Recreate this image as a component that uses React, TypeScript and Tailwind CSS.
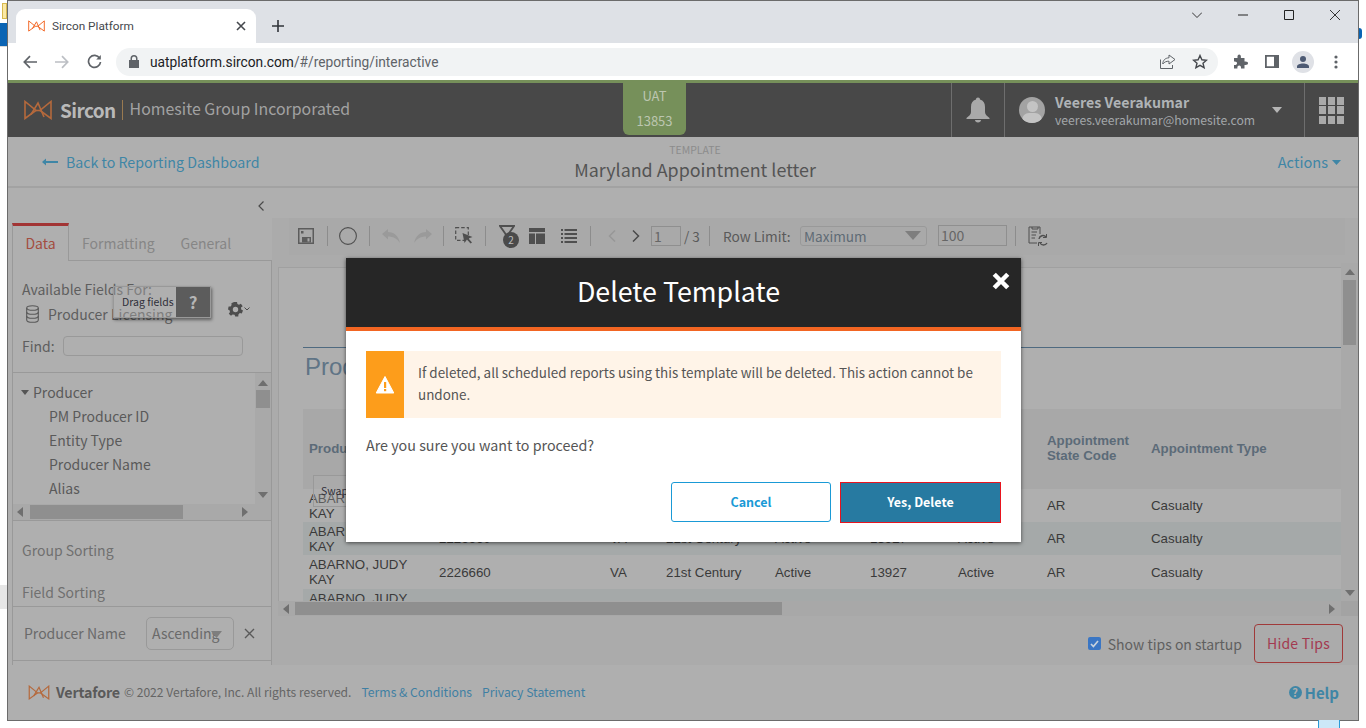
import React from "react";

const Logo = ({ w, h, c }: { w: number; h: number; c: string }) => (
  <svg width={w} height={h} viewBox="0 0 28 20" fill="none" stroke={c} strokeWidth="1.6">
    <path d="M1 1.5V18.5L12 10.5L1 1.5Z" />
    <path d="M27 1.5V18.5L16 10.5L27 1.5Z" />
    <path d="M7 14.5L14 3L20 17" />
    <path d="M12 10.5L16 10.5" />
  </svg>
);

const Sep = ({ ml, mr }: { ml: number; mr: number }) => (
  <div className="w-px h-[20px] bg-[#8c8c8c] shrink-0" style={{ marginLeft: ml, marginRight: mr }} />
);

const Arrow = ({ d }: { d: "u" | "d" | "l" | "r" }) => {
  const p = { u: "M0 6L5 0L10 6Z", d: "M0 0H10L5 6Z", l: "M6 0V10L0 5Z", r: "M0 0V10L6 5Z" }[d];
  return (
    <svg width="10" height="10" viewBox="0 0 10 10" className="shrink-0" fill="#6f6f6f">
      <path d={p} />
    </svg>
  );
};

const rows = [
  { bg: "bg-[#afafaf]", h: "h-[33px]" },
  { bg: "bg-[#a5a9a9]", h: "h-[33px]" },
  { bg: "bg-[#afafaf]", h: "h-[34px]" },
];
const gridCols = "grid grid-cols-[136px_171px_56px_109px_95px_88px_89px_104px_115px] items-center";

export default function App() {
  return (
    <div className="relative w-[1366px] h-[728px] overflow-hidden bg-white font-['Noto_Sans_CJK_JP','Liberation_Sans',sans-serif]">
      <div className="absolute left-[2px] top-[3px] w-[5px] h-[16px] bg-[#fbe9a5] border border-[#d8b94e]" />
      <div className="absolute left-0 top-[23px] w-[7px] h-[23px] bg-[#0a64b4]" />
      <div className="absolute left-0 top-[585px] w-[7px] h-[24px] bg-[#e6e6e6]" />
      <div className="absolute left-[1359px] top-[28px] w-[3px] h-[11px] rounded-r-full bg-[#0a64b4]" />
      <div className="absolute left-[0px] top-[46px] w-[7px] h-px bg-[#d8d8d8]" />
      <div className="absolute left-[1318px] top-[720px] w-[22px] h-[8px] bg-[#cce8f8] border-x border-[#2b9ad6]" />

      <div className="ml-[7px] w-[1352px] h-[721px] border border-[#6b6b6b] flex flex-col bg-[#afafaf]">
        {/* Browser tab strip */}
        <div className="h-[42px] shrink-0 bg-[#dee1e6] flex items-end pl-[8px] font-['Roboto',sans-serif]">
          <div className="w-[240px] h-[34px] bg-white rounded-t-[9px] flex items-center pl-[12px] pr-[10px]">
            <Logo w={17} h={12} c="#f26522" />
            <span className="ml-[7px] text-[11.8px] leading-[16px] text-[#45484d]">Sircon Platform</span>
            <svg className="ml-auto" width="10" height="10" viewBox="0 0 10 10" stroke="#45484d" strokeWidth="1.6">
              <path d="M1 1L9 9M9 1L1 9" />
            </svg>
          </div>
          <svg className="ml-[16px] mb-[11px]" width="12" height="12" viewBox="0 0 12 12" stroke="#30343a" strokeWidth="1.6">
            <path d="M6 0V12M0 6H12" />
          </svg>
          <div className="ml-auto self-start flex items-center h-[28px] pr-[18px] gap-[36px]">
            <svg width="10" height="6" viewBox="0 0 10 6" fill="none" stroke="#222" strokeWidth="0.9">
              <path d="M0 0.5L5 5.5L10 0.5" />
            </svg>
            <svg width="10" height="10" viewBox="0 0 10 10" stroke="#222" strokeWidth="1">
              <path d="M0 5H10" />
            </svg>
            <svg width="10" height="10" viewBox="0 0 10 10" fill="none" stroke="#222" strokeWidth="1">
              <path d="M0.5 0.5H9.5V9.5H0.5Z" />
            </svg>
            <svg width="10" height="10" viewBox="0 0 10 10" stroke="#222" strokeWidth="0.9">
              <path d="M0 0L10 10M10 0L0 10" />
            </svg>
          </div>
        </div>

        {/* Browser toolbar */}
        <div className="h-[37px] shrink-0 bg-white flex items-center font-['Roboto',sans-serif]">
          <svg className="ml-[15px]" width="14" height="14" viewBox="0 0 14 14" fill="none" stroke="#5f6368" strokeWidth="1.7">
            <path d="M14 7H1.5M7 1.2L1.3 7L7 12.8" />
          </svg>
          <svg className="ml-[18px]" width="14" height="14" viewBox="0 0 14 14" fill="none" stroke="#bcbfc4" strokeWidth="1.7">
            <path d="M0 7H12.5M7 1.2L12.7 7L7 12.8" />
          </svg>
          <svg className="ml-[18px]" width="15" height="15" viewBox="0 0 15 15" fill="none" stroke="#5f6368" strokeWidth="1.7">
            <path d="M12.6 4.2A6 6 0 1 0 13.5 8" />
            <path d="M13.8 1V5.6H9.2Z" fill="#5f6368" stroke="none" />
          </svg>
          <div className="ml-[14px] w-[1102px] h-[28px] bg-[#f1f3f4] rounded-full flex items-center pl-[13px] pr-[10px]">
            <svg width="10" height="13" viewBox="0 0 10 13" fill="#5f6368">
              <path d="M1.5 5V3.6a3.5 3.5 0 0 1 7 0V5H10V13H0V5ZM3 5H7V3.6a2 2 0 0 0-4 0Z" />
            </svg>
            <span className="ml-[11px] text-[13.75px] leading-[18px] text-[#5f6368]">
              <span className="text-[#202124]">uatplatform.sircon.com</span>/#/reporting/interactive
            </span>
            <svg className="ml-auto" width="16" height="15" viewBox="0 0 16 15" fill="none" stroke="#5f6368" strokeWidth="1">
              <path d="M0.5 5.5V14.5H12.5V11" />
              <path d="M9 1V3.8C5 4 2.8 6.5 2.8 10C4.5 7.8 6.5 7.2 9 7.2V10L15 5.5Z" />
            </svg>
            <svg className="ml-[16px]" width="16" height="15" viewBox="0 0 16 15" fill="none" stroke="#45484d" strokeWidth="1.4">
              <path d="M8 1.5L9.9 5.8L14.5 6.2L11 9.2L12.1 13.7L8 11.3L3.9 13.7L5 9.2L1.5 6.2L6.1 5.8Z" />
            </svg>
          </div>
          <svg className="ml-[15px]" width="15" height="15" viewBox="0 0 15 15" fill="#5f6368">
            <path d="M1 4H4.5C4.2 1.2 5.2 0.5 6.2 0.5S8.2 1.2 7.9 4H11.5V7.5C14.2 7.2 15 8.2 15 9.2S14.2 11.2 11.5 10.9V14.5H8C8.2 12.3 7.4 11.5 6.2 11.5S4.2 12.3 4.4 14.5H1V11C3.2 11.2 4 10.2 4 9.2S3.2 7.2 1 7.5Z" />
          </svg>
          <svg className="ml-[17px]" width="14" height="13" viewBox="0 0 14 13" fill="#5f6368">
            <path d="M0 0H14V13H0ZM1.8 1.8V11.2H9V1.8Z" fill="#5f6368" fillRule="evenodd" />
          </svg>
          <div className="ml-[13px] w-[22px] h-[22px] rounded-full bg-[#dfe1e6] flex items-center justify-center">
            <svg width="12" height="12" viewBox="0 0 12 12" fill="#4d5a73">
              <circle cx="6" cy="3" r="3" />
              <path d="M0 12V10.5C0 8.5 3 7.5 6 7.5S12 8.5 12 10.5V12Z" />
            </svg>
          </div>
          <svg className="ml-[20px]" width="4" height="14" viewBox="0 0 4 14" fill="#5f6368">
            <circle cx="2" cy="2" r="1.6" />
            <circle cx="2" cy="7" r="1.6" />
            <circle cx="2" cy="12" r="1.6" />
          </svg>
        </div>

        <div className="h-[3px] shrink-0 bg-[#76905a]" />

        {/* App header */}
        <div className="h-[54px] shrink-0 bg-[#484848] flex items-stretch">
          <div className="w-[615px] flex items-center pl-[16px] shrink-0">
            <Logo w={28} h={20} c="#b5693c" />
            <span className="ml-[8px] text-[19px] leading-[26px] font-bold text-[#b9b9b9] tracking-[-0.6px]">Sircon</span>
            <div className="ml-[6px] w-px h-[20px] bg-[#9a7a50]" />
            <span className="ml-[7px] -mt-[2px] text-[15.9px] leading-[26px] text-[#a2a2a2]">Homesite Group Incorporated</span>
          </div>
          <div className="w-[63px] h-[52px] shrink-0 bg-[#76905a] rounded-b-[6px] flex flex-col items-center text-[#bcc6b0] text-[13px] leading-[25px]">
            <span>UAT</span>
            <span>13853</span>
          </div>
          <div className="ml-[265px] w-[54px] border-x border-[#6e6e6e] shrink-0 flex items-center justify-center">
            <svg width="24" height="26" viewBox="0 0 24 26" fill="#a9a9a9">
              <path d="M12 0.5C13.3 0.5 14 1.4 14 2.5C17.5 3.5 19 6 19 10V15C19 17.5 21 19 23.5 21V22H0.5V21C3 19 5 17.5 5 15V10C5 6 6.5 3.5 10 2.5C10 1.4 10.7 0.5 12 0.5Z" />
              <path d="M9 23H15C15 24.5 13.7 25.5 12 25.5S9 24.5 9 23Z" />
            </svg>
          </div>
          <div className="w-[299px] shrink-0 flex items-center pl-[14px]">
            <div className="relative w-[26px] h-[26px] rounded-full bg-[#a3a3a3] overflow-hidden shrink-0">
              <div className="absolute left-[7.5px] top-[4px] w-[11px] h-[11px] rounded-full bg-[#c4c4c4]" />
              <div className="absolute left-[3px] top-[16px] w-[20px] h-[14px] rounded-full bg-[#c4c4c4]" />
            </div>
            <div className="ml-[10px] flex flex-col">
              <span className="text-[14.2px] leading-[19px] font-bold text-[#afb3b6]">Veeres Veerakumar</span>
              <span className="text-[12.2px] leading-[16px] text-[#a3a7aa]">veeres.veerakumar@homesite.com</span>
            </div>
            <svg className="ml-auto mr-[22px]" width="10" height="6" viewBox="0 0 10 6" fill="#b5b5b5">
              <path d="M0 0H10L5 6Z" />
            </svg>
          </div>
          <div className="flex-1 border-l border-[#6e6e6e] flex items-center justify-center">
            <div className="grid grid-cols-3 gap-[1.5px] w-[25px]">
              {Array.from({ length: 9 }).map((_, i) => (
                <div key={i} className="h-[8px] bg-[#aaaaaa]" />
              ))}
            </div>
          </div>
        </div>

        {/* Sub header */}
        <div className="relative h-[51px] shrink-0 border-b-2 border-[#a2a2a2] flex items-center justify-between pl-[34px] pr-[17px] pt-[1px]">
          <div className="flex items-center">
            <svg width="16" height="8" viewBox="0 0 16 8" fill="#3f86a6">
              <path d="M0 4L4 0.5V3H16V5H4V7.5Z" />
            </svg>
            <span className="ml-[8px] text-[14.2px] leading-[20px] text-[#3f86a6]">Back to Reporting Dashboard</span>
          </div>
          <div className="absolute left-[687px] -translate-x-1/2 top-[6px] flex flex-col items-center">
            <span className="text-[10.5px] leading-[14px] text-[#8c8c8c]">TEMPLATE</span>
            <span className="text-[17.9px] leading-[26px] -mt-[1px] text-[#545454] whitespace-nowrap">Maryland Appointment letter</span>
          </div>
          <div className="flex items-center">
            <span className="text-[14.6px] leading-[20px] text-[#3f86a6]">Actions</span>
            <svg className="ml-[4px]" width="9" height="5" viewBox="0 0 9 5" fill="#3f86a6">
              <path d="M0 0H9L4.5 5Z" />
            </svg>
          </div>
        </div>

        {/* Main */}
        <div className="h-[477px] shrink-0 flex">
          {/* Left panel */}
          <div className="relative w-[264px] shrink-0 pl-[4px] flex flex-col">
            <div className="h-[35px] shrink-0 flex items-center justify-end pr-[8px]">
              <svg width="6" height="10" viewBox="0 0 6 10" fill="none" stroke="#4a4a4a" strokeWidth="1.2">
                <path d="M5.5 0.5L1 5L5.5 9.5" />
              </svg>
            </div>
            <div className="h-[38px] shrink-0 flex items-end -mb-px relative z-10">
              <div className="w-[57px] h-[38px] pb-[1px] border-t-[3px] border-x border-t-[#a23434] border-x-[#999] bg-[#afafaf] flex items-center justify-center text-[14px] leading-[20px] text-[#a34d40]">
                Data
              </div>
              <span className="ml-[13px] h-[36px] flex items-center text-[14px] text-[#868686]">Formatting</span>
              <span className="ml-[26px] h-[36px] flex items-center text-[14px] text-[#868686]">General</span>
            </div>
            <div className="flex-1 border border-b-0 border-[#999] flex flex-col min-h-0">
              <div className="h-[112px] shrink-0 border-b border-[#999] pl-[9px] pt-[18px]">
                <div className="flex">
                  <div className="flex-1 min-w-0">
                    <div className="text-[14px] leading-[21px] text-[#5e5e5e]">Available Fields For:</div>
                    <div className="flex items-center h-[25px] mt-[1px]">
                      <svg className="ml-[4px]" width="13" height="18" viewBox="0 0 13 18" fill="none" stroke="#5a5a5a" strokeWidth="1.1">
                        <ellipse cx="6.5" cy="3" rx="5.8" ry="2.3" />
                        <path d="M0.7 3V15C0.7 16.3 3.3 17.3 6.5 17.3S12.3 16.3 12.3 15V3" />
                        <path d="M0.7 7C0.7 8.3 3.3 9.3 6.5 9.3S12.3 8.3 12.3 7M0.7 11C0.7 12.3 3.3 13.3 6.5 13.3S12.3 12.3 12.3 11" />
                      </svg>
                      <span className="ml-[9px] text-[14px] leading-[20px] text-[#5e5e5e]">Producer Licensing</span>
                    </div>
                  </div>
                  <div className="mr-[21px] mt-[13px] flex items-center">
                    <svg width="15" height="15" viewBox="0 0 15 15" fill="#4d4d4d">
                      <path fillRule="evenodd" d="M6 0H9L9.4 2L11 2.8L12.9 1.8L14.7 4.2L13 5.5L13.2 7.5L15 8.6L13.8 11.4L11.8 11L10.4 12.4L10.3 14.5H7.2L6.6 12.8L4.6 12.5L3 13.8L0.8 11.7L2 10L1.5 8.3L0 7.6L0.6 4.6L2.6 4.6L3.6 3L3.4 1.2ZM7.5 4.8A2.7 2.7 0 1 0 7.5 10.2A2.7 2.7 0 1 0 7.5 4.8Z" />
                    </svg>
                    <svg className="ml-[1px]" width="6" height="4" viewBox="0 0 6 4" fill="none" stroke="#4d4d4d" strokeWidth="1">
                      <path d="M0.5 0.5L3 3L5.5 0.5" />
                    </svg>
                  </div>
                </div>
                <div className="flex items-center mt-[10px]">
                  <span className="w-[41px] text-[14px] leading-[20px] text-[#5e5e5e]">Find:</span>
                  <div className="w-[180px] h-[20px] border border-[#999] rounded-[4px]" />
                </div>
              </div>

              <div className="h-[131px] shrink-0 flex">
                <div className="flex-1 pt-[7px] relative">
                  <div className="flex items-center h-[24px] pl-[8px]">
                    <svg width="8" height="5" viewBox="0 0 8 5" fill="#555">
                      <path d="M0 0H8L4 5Z" />
                    </svg>
                    <span className="ml-[4px] text-[14px] text-[#5a5a5a]">Producer</span>
                  </div>
                  {["PM Producer ID", "Entity Type", "Producer Name", "Alias"].map((t) => (
                    <div key={t} className="h-[24px] flex items-center pl-[36px] text-[14px] text-[#5a5a5a]">
                      {t}
                    </div>
                  ))}
                </div>
                <div className="w-[16px] bg-[#a9a9a9] flex flex-col items-center pt-[7px] pr-[1px]">
                  <Arrow d="u" />
                  <div className="w-[14px] h-[18px] bg-[#8f8f8f]" />
                  <div className="mt-auto mb-[2px]">
                    <Arrow d="d" />
                  </div>
                </div>
              </div>
              <div className="h-[16px] shrink-0 bg-[#a9a9a9] flex items-center pl-[4px]">
                <Arrow d="l" />
                <div className="ml-[3px] w-[153px] h-[14px] bg-[#8f8f8f]" />
                <div className="ml-[59px]">
                  <Arrow d="r" />
                </div>
              </div>
              <div className="h-[87px] shrink-0 border-t border-b border-[#999] pl-[9px] flex flex-col text-[14px] text-[#707070]">
                <div className="h-[20px] leading-[20px] mt-[19px]">Group Sorting</div>
                <div className="h-[20px] leading-[20px] mt-[22px]">Field Sorting</div>
              </div>
              <div className="h-[54px] shrink-0 border-b border-[#999] flex items-center pl-[11px]">
                <span className="text-[14px] text-[#6a6a6a] w-[122px]">Producer Name</span>
                <div className="w-[88px] h-[33px] border border-[#999] rounded-[5px] flex items-center pl-[5px] relative">
                  <span className="text-[14px] text-[#6a6a6a]">Ascending</span>
                  <svg className="absolute left-[64px] top-[13px]" width="11" height="7" viewBox="0 0 11 7" fill="#7e7e7e">
                    <path d="M0 0H11L5.5 7Z" />
                  </svg>
                </div>
                <svg className="ml-[10px]" width="11" height="11" viewBox="0 0 11 11" stroke="#5a5a5a" strokeWidth="1.4">
                  <path d="M1 1L10 10M10 1L1 10" />
                </svg>
              </div>
            </div>

            {/* Drag fields tip */}
            <div className="absolute z-20 left-[105px] top-[98px] w-[98px] h-[32px] flex border border-[#999] shadow-[1px_2px_3px_rgba(0,0,0,0.45)] bg-[#afafaf]/40">
              <div className="w-[62px] pl-[8px] flex items-center text-[10.5px] leading-[14px] text-[#2f2f3a] whitespace-nowrap">Drag fields</div>
              <div className="flex-1 bg-[#5c5c5c] flex items-center justify-center text-[17px] font-bold text-[#b5b5b5]">?</div>
            </div>
          </div>

          {/* Right column */}
          <div className="relative flex-1 bg-[#ababab] flex flex-col min-w-0">
            <div className="h-[30px] shrink-0 bg-[#afafaf]" />
            <div className="h-[37px] shrink-0 ml-[17px] mr-[13px] bg-[#a9a9a9] flex items-center pl-[9px] pb-[2px]">
              <svg width="16" height="16" viewBox="0 0 16 16" fill="#5c5c5c">
                <path fillRule="evenodd" d="M0 0H16V16H0ZM1.5 1.5V14.5H14.5V1.5Z" />
                <rect x="3" y="3" width="2.5" height="2.5" />
                <path fillRule="evenodd" d="M4 9H13V14.5H4ZM9.5 10.2V13.5H11.5V10.2Z" />
              </svg>
              <Sep ml={13} mr={11} />
              <svg width="18" height="18" viewBox="0 0 18 18" fill="none" stroke="#4f4f4f" strokeWidth="1.1">
                <circle cx="9" cy="9" r="8.4" />
              </svg>
              <Sep ml={12} mr={12} />
              <svg width="18" height="14" viewBox="0 0 18 14" fill="#9a9a9a">
                <path d="M0 5L6 0V3C12 3 16 6.5 18 14C15 9.5 11 7.5 6 7.5V10.5Z" />
              </svg>
              <svg className="ml-[14px]" width="18" height="14" viewBox="0 0 18 14" fill="#9a9a9a">
                <path d="M18 5L12 0V3C6 3 2 6.5 0 14C3 9.5 7 7.5 12 7.5V10.5Z" />
              </svg>
              <Sep ml={11} mr={11} />
              <svg width="18" height="17" viewBox="0 0 18 17" fill="none" stroke="#4f4f4f" strokeWidth="1.2">
                <rect x="0.7" y="0.7" width="12.6" height="12.6" strokeDasharray="3.5 2" />
                <path d="M7.5 6L17.5 10L13.5 11.5L17 15.5L15.5 16.5L12 12.5L9.5 16Z" fill="#4f4f4f" stroke="none" />
              </svg>
              <Sep ml={12} mr={13} />
              <div className="relative w-[20px] h-[22px] mt-[2px]">
                <svg width="16" height="12" viewBox="0 0 16 12" fill="none" stroke="#4f4f4f" strokeWidth="1.8" className="absolute left-0 -top-[1px]">
                  <path d="M1 1H15L8 11Z" />
                </svg>
                <div className="absolute left-[4px] top-[6px] w-[16px] h-[16px] rounded-full bg-[#4a4a4a] text-[#bdbdbd] text-[10px] leading-[16px] text-center">2</div>
              </div>
              <svg className="ml-[10px]" width="16" height="16" viewBox="0 0 16 16" fill="#4f4f4f">
                <path d="M0 0H16V4H0ZM0 5.5H6V16H0ZM7 5.5H16V16H7Z" />
              </svg>
              <svg className="ml-[16px]" width="16" height="16" viewBox="0 0 16 16" fill="#4f4f4f">
                <path d="M0 1H2V3H0ZM3.5 1H16V3H3.5ZM0 5H2V7H0ZM3.5 5H16V7H3.5ZM0 9H2V11H0ZM3.5 9H16V11H3.5ZM0 13H2V15H0ZM3.5 13H16V15H3.5Z" />
              </svg>
              <Sep ml={13} mr={17} />
              <svg width="8" height="12" viewBox="0 0 8 12" fill="none" stroke="#979797" strokeWidth="1.5">
                <path d="M7 0.5L1.5 6L7 11.5" />
              </svg>
              <svg className="ml-[16px]" width="8" height="12" viewBox="0 0 8 12" fill="none" stroke="#4a4a4a" strokeWidth="1.5">
                <path d="M1 0.5L6.5 6L1 11.5" />
              </svg>
              <div className="ml-[11px] w-[30px] h-[20px] border border-[#8f8f8f] text-[14px] leading-[18px] pl-[2px] text-[#666]">1</div>
              <span className="w-[28px] pl-[3px] text-[13.5px] leading-[20px] text-[#5a5a5a]">/ 3</span>
              <Sep ml={0} mr={13} />
              <span className="w-[77px] text-[13.7px] leading-[20px] text-[#5a5a5a] whitespace-nowrap">Row Limit:</span>
              <div className="w-[127px] h-[20px] border border-[#999] rounded-[3px] flex items-center justify-between pl-[3px] pr-[5px]">
                <span className="text-[13.6px] leading-[18px] text-[#5f6b75]">Maximum</span>
                <svg width="16" height="9" viewBox="0 0 16 9" fill="#7e7e7e">
                  <path d="M0 0H16L8 9Z" />
                </svg>
              </div>
              <div className="ml-[11px] w-[69px] h-[21px] border border-[#8f8f8f] text-[14px] leading-[19px] pl-[2px] text-[#666]">100</div>
              <Sep ml={8} mr={12} />
              <svg width="20" height="20" viewBox="0 0 20 20" fill="none" stroke="#4f4f4f" strokeWidth="1">
                <path d="M9 17H1V1H4M4 1H10V3H4ZM10 1H12V8" />
                <path d="M3.5 6H9M3.5 9H8M3.5 12H7" />
                <path d="M11 13A4 4 0 0 1 18 11M19 17A4 4 0 0 1 12 17" strokeWidth="1.4" />
                <path d="M18.5 8V11.5H15M10.5 20V16.5H14" />
              </svg>
            </div>

            <div className="h-[346px] shrink-0 flex">
              <div className="ml-[6px] w-[1063px] h-[334px] mt-[12px] border-t border-l border-[#a0a0a0] bg-[#afafaf] overflow-hidden relative">
                <div className="h-[79px]" />
                <div className="ml-[24px] border-t border-[#4f6a80] h-[62px] pt-[5px] pl-[2px] text-[24px] leading-[28px] font-['Liberation_Sans',sans-serif] text-[#5f7486]">
                  Producer Licensing
                </div>
                <div className="font-['Liberation_Sans',sans-serif] ml-[24px]">
                  <div className={`${gridCols} h-[80px] pb-[2px] bg-[#a8a8a8] text-[13.3px] leading-[15px] font-bold text-[#5c6b78]`}>
                    <div className="pl-[6px]">Producer Name</div>
                    <div />
                    <div />
                    <div />
                    <div />
                    <div />
                    <div />
                    <div>Appointment State Code</div>
                    <div className="whitespace-nowrap">Appointment Type</div>
                  </div>
                  {rows.map((r, i) => (
                    <div key={i} className={`${gridCols} ${r.h} ${r.bg} text-[13.3px] leading-[15px] text-[#3a3a3a]`}>
                      <div className="pl-[6px] pr-[26px]">ABARNO, JUDY KAY</div>
                      <div>2226660</div>
                      <div>VA</div>
                      <div>21st Century</div>
                      <div>Active</div>
                      <div>13927</div>
                      <div>Active</div>
                      <div>AR</div>
                      <div>Casualty</div>
                    </div>
                  ))}
                  <div className={`${gridCols} h-[34px] bg-[#a5a9a9] text-[13.3px] leading-[15px] text-[#3a3a3a]`}>
                    <div className="pl-[6px] pr-[26px]">ABARNO, JUDY KAY</div>
                  </div>
                </div>
                <div className="absolute left-[34px] top-[207px] w-[60px] h-[32px] border border-[#999] bg-[#afafaf]/30 pl-[7px] text-[10.5px] leading-[30px] text-[#2f2f3a]">Swap</div>
              </div>
              <div className="mt-[8px] w-[17px] bg-[#a9a9a9] flex flex-col items-center pt-[6px]">
                <Arrow d="u" />
                <div className="w-[13px] h-[65px] bg-[#8f8f8f] mt-[1px]" />
                <div className="mt-auto mb-[1px]">
                  <Arrow d="d" />
                </div>
              </div>
            </div>

            <div className="h-[15px] shrink-0 ml-[6px] flex items-center bg-[#a8a8a8]">
              <div className="ml-[5px]">
                <Arrow d="l" />
              </div>
              <div className="ml-[2px] w-[487px] h-[13px] bg-[#8f8f8f]" />
              <div className="ml-auto mr-[2px]">
                <Arrow d="r" />
              </div>
              <div className="w-[17px] h-[15px] bg-[#a3a3a3]" />
            </div>

            <div className="h-[49px] shrink-0 flex items-center justify-end pr-[15px] pt-[6px]">
              <div className="w-[13px] h-[13px] rounded-[2px] bg-[#3a76c4] flex items-center justify-center">
                <svg width="9" height="8" viewBox="0 0 9 8" fill="none" stroke="#c8d2dc" strokeWidth="1.7">
                  <path d="M1 4L3.4 6.5L8 1" />
                </svg>
              </div>
              <span className="ml-[7px] mt-[1px] text-[14px] leading-[20px] text-[#606060]">Show tips on startup</span>
              <div className="ml-[12px] w-[89px] h-[39px] rounded-[4px] border border-[#a03a3a] flex items-center justify-center text-[14px] text-[#a33a50] tracking-[0.2px]">
                Hide Tips
              </div>
            </div>
          </div>
        </div>

        {/* Footer */}
        <div className="h-[55px] shrink-0 flex items-center pl-[20px] pr-[19px] pb-[1px]">
          <Logo w={22} h={15} c="#b5693c" />
          <span className="ml-[6px] text-[14.3px] leading-[20px] font-bold text-[#5a5a5a] tracking-[-0.2px]">Vertafore</span>
          <span className="ml-[4px] text-[12.1px] leading-[20px] text-[#656565]">© 2022 Vertafore, Inc. All rights reserved.</span>
          <span className="ml-[10px] text-[12.2px] leading-[20px] text-[#3f7fa3]">Terms &amp; Conditions</span>
          <span className="ml-[10px] text-[12.2px] leading-[20px] text-[#3f7fa3]">Privacy Statement</span>
          <div className="ml-auto flex items-center mt-[1px]">
            <div className="w-[13px] h-[13px] rounded-full bg-[#3f86a6] text-[#afafaf] text-[11px] leading-[13px] font-bold text-center">?</div>
            <span className="ml-[3px] text-[15px] leading-[20px] font-bold text-[#3f86a6]">Help</span>
          </div>
        </div>
      </div>

      {/* Modal */}
      <div className="absolute left-[346px] top-[258px] w-[675px] h-[284px] bg-white shadow-[0_1px_4px_rgba(0,0,0,0.6)] flex flex-col">
        <div className="relative h-[73px] shrink-0 bg-[#262626] border-b-4 border-[#f26522] flex items-center justify-center">
          <span className="text-[26.8px] leading-[36px] text-white -translate-y-[2px] -translate-x-[5px]">Delete Template</span>
          <svg className="absolute left-[646px] top-[14px]" width="18" height="18" viewBox="0 0 16 16" stroke="white" strokeWidth="4">
            <path d="M2 2L14 14M14 2L2 14" />
          </svg>
        </div>
        <div className="flex-1 px-[20px] pt-[20px] flex flex-col">
          <div className="h-[67px] flex bg-[#fff4e8] shrink-0">
            <div className="w-[38px] bg-[#fd9d1b] flex items-center justify-center">
              <svg width="18" height="18" viewBox="0 0 18 18">
                <path d="M9 0.5L17.8 17H0.2Z" fill="white" stroke="white" strokeLinejoin="round" />
                <rect x="8" y="6" width="2.2" height="6" fill="#fd9d1b" />
                <rect x="8" y="13" width="2.2" height="2.2" fill="#fd9d1b" />
              </svg>
            </div>
            <div className="ml-[14px] w-[570px] pt-[10px] text-[13.45px] leading-[22px] text-[#555]">
              If deleted, all scheduled reports using this template will be deleted. This action cannot be undone.
            </div>
          </div>
          <div className="mt-[17px] text-[14.3px] leading-[20px] text-[#555]">Are you sure you want to proceed?</div>
          <div className="mt-[27px] flex justify-end gap-[9px]">
            <div className="w-[160px] h-[40px] rounded-[3px] border border-[#1a9ad6] flex items-center justify-center text-[12.5px] font-bold text-[#1a9ad6]">
              Cancel
            </div>
            <div className="w-[161px] h-[41px] border border-[#e8141e] bg-[#277aa1] flex items-center justify-center text-[12.5px] font-bold text-white">
              Yes, Delete
            </div>
          </div>
        </div>
      </div>
    </div>
  );
}
